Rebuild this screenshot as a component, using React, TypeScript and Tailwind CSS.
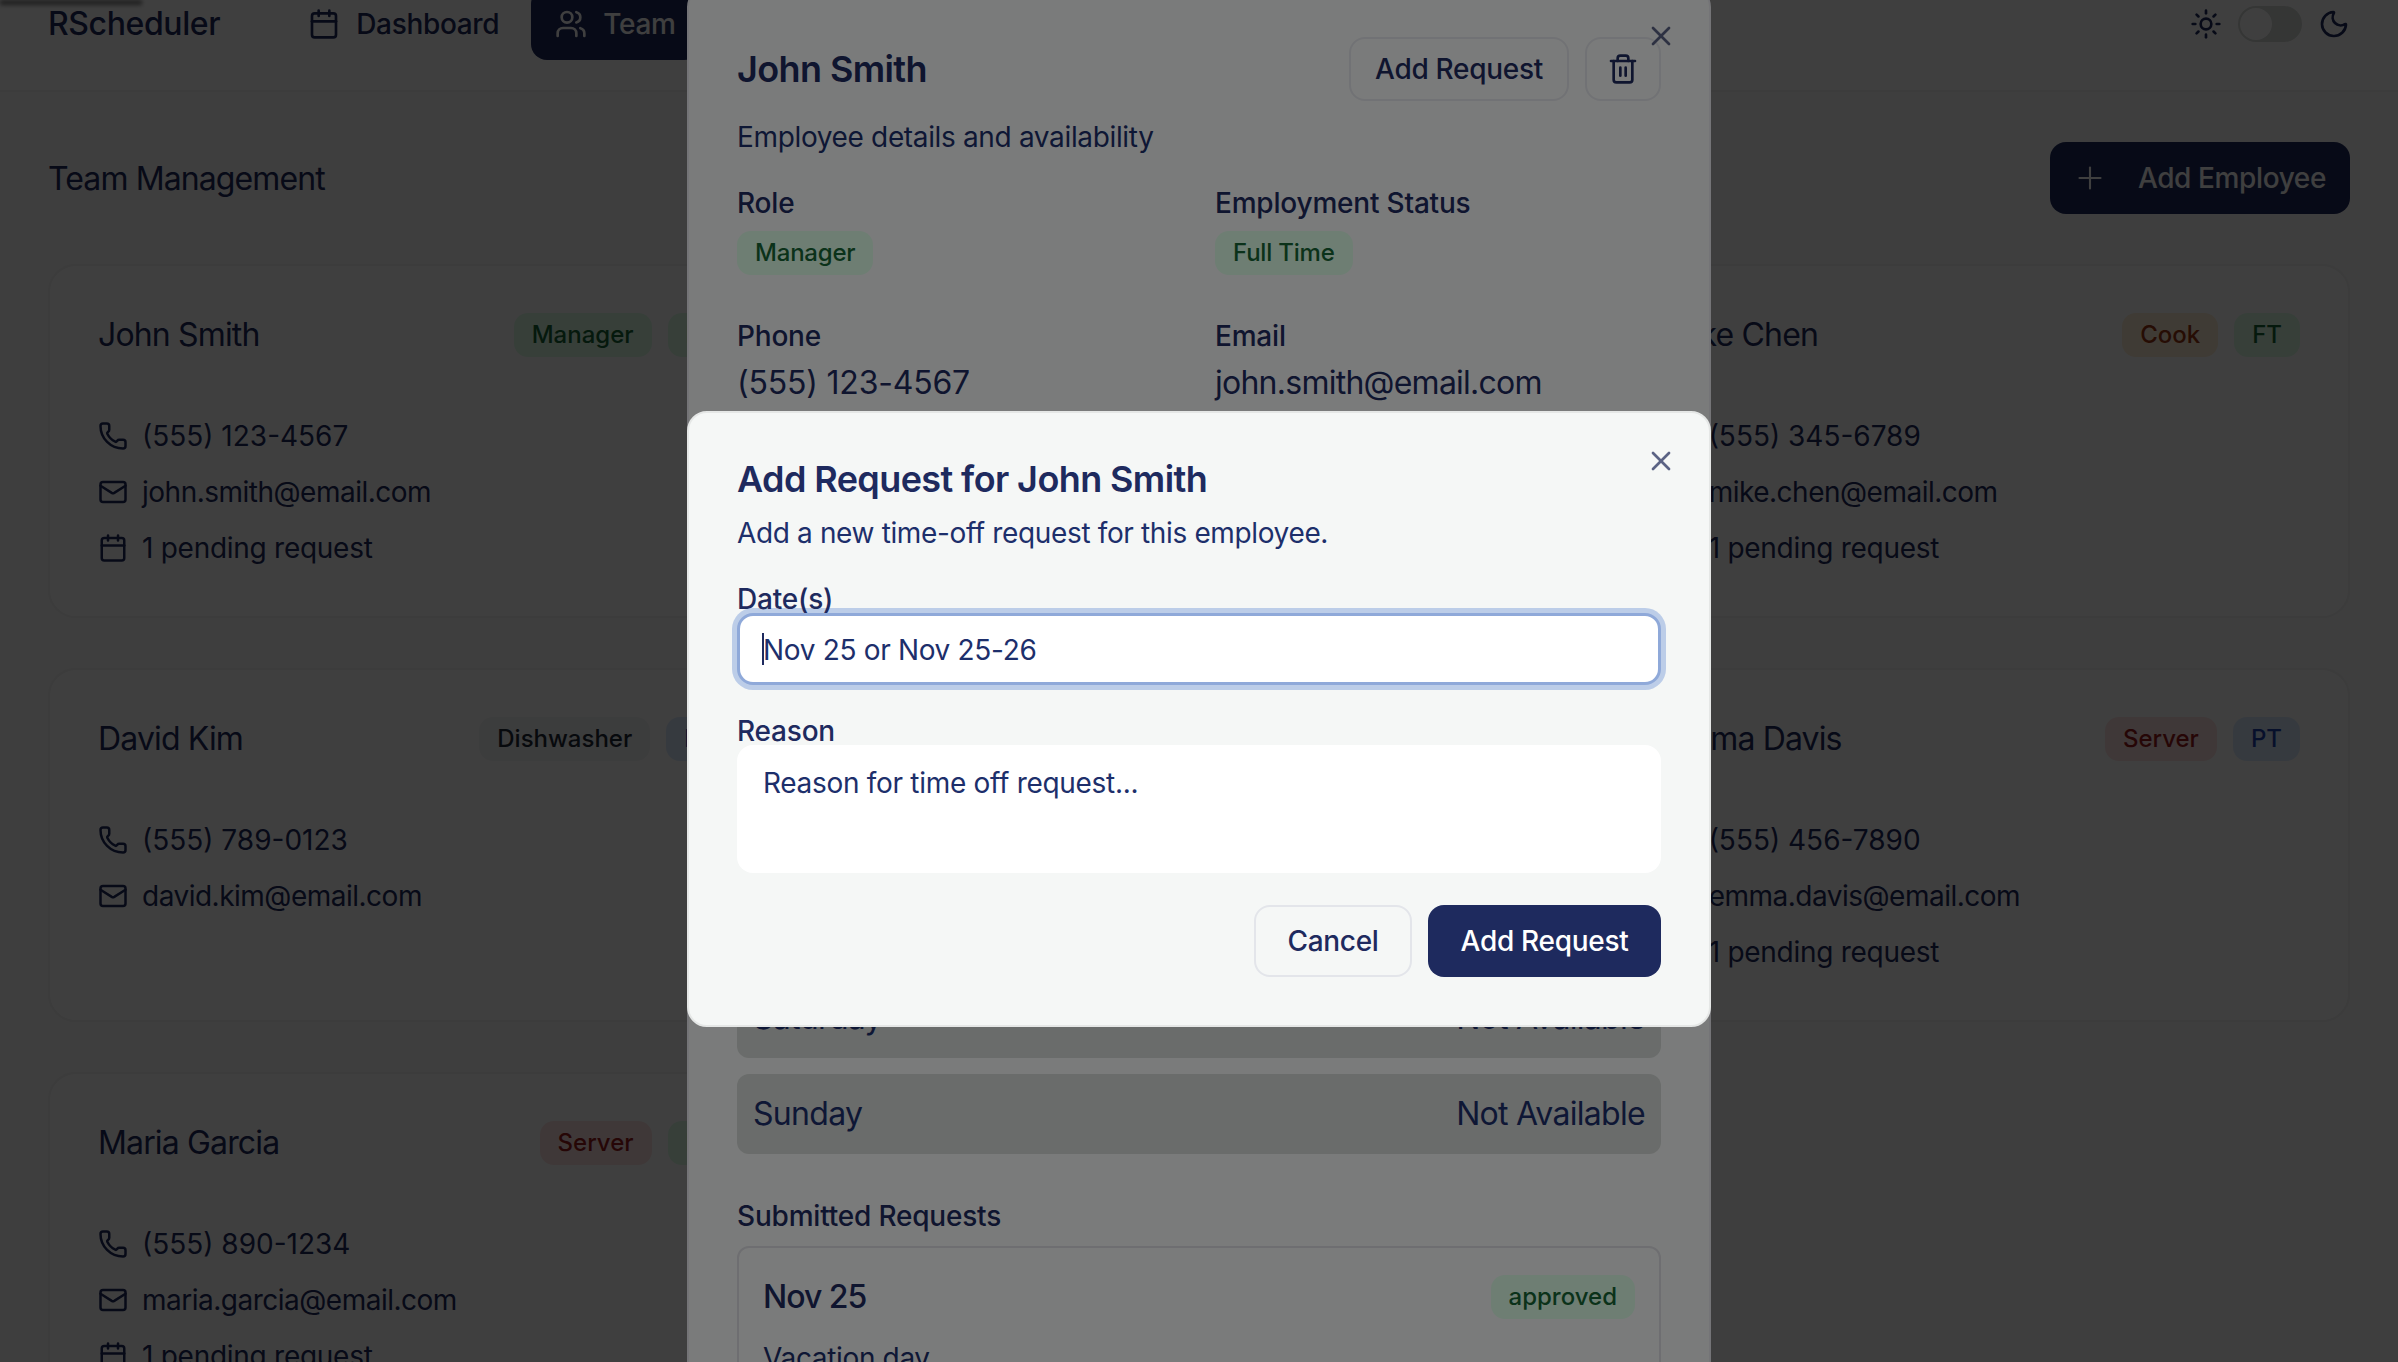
import { Calendar, Mail, Moon, Phone, Plus, Sun, Trash2, Users, X } from 'lucide-react';

type Employee = {
  name: string;
  role: string;
  roleClass: string;
  status: string;
  statusClass: string;
  phone: string;
  email: string;
  pending: boolean;
};

const green = 'bg-[#dcfce7] text-[#166534]';
const blue = 'bg-[#dbeafe] text-[#1e40af]';

const columns: Employee[][] = [
  [
    { name: 'John Smith', role: 'Manager', roleClass: green, status: 'FT', statusClass: green, phone: '(555) 123-4567', email: 'john.smith@email.com', pending: true },
    { name: 'David Kim', role: 'Dishwasher', roleClass: 'bg-[#f3f4f6] text-[#1f2937]', status: 'PT', statusClass: blue, phone: '(555) 789-0123', email: 'david.kim@email.com', pending: false },
    { name: 'Maria Garcia', role: 'Server', roleClass: 'bg-[#fee2e2] text-[#991b1b]', status: 'FT', statusClass: green, phone: '(555) 890-1234', email: 'maria.garcia@email.com', pending: true },
  ],
  [],
  [
    { name: 'Mike Chen', role: 'Cook', roleClass: 'bg-[#ffedd5] text-[#9a3412]', status: 'FT', statusClass: green, phone: '(555) 345-6789', email: 'mike.chen@email.com', pending: true },
    { name: 'Emma Davis', role: 'Server', roleClass: 'bg-[#fee2e2] text-[#991b1b]', status: 'PT', statusClass: blue, phone: '(555) 456-7890', email: 'emma.davis@email.com', pending: true },
  ],
];

const days = ['Monday', 'Tuesday', 'Wednesday', 'Thursday', 'Friday', 'Saturday', 'Sunday'];

function Badge({ className, children }: { className: string; children: React.ReactNode }) {
  return (
    <span className={`inline-flex h-[44px] items-center rounded-[14px] px-[18px] text-[24px] font-medium ${className}`}>
      {children}
    </span>
  );
}

function EmployeeCard({ employee }: { employee: Employee }) {
  return (
    <div className="h-[354px] rounded-[28px] border-2 border-[#f0f0f0] bg-white px-[48px] pt-[47px]">
      <div className="flex h-[44px] items-center justify-between">
        <span className="text-[32px] tracking-[-0.85px]">{employee.name}</span>
        <div className="flex gap-4">
          <Badge className={employee.roleClass}>{employee.role}</Badge>
          <Badge className={employee.statusClass}>{employee.status}</Badge>
        </div>
      </div>
      <div className="mt-[59px] flex flex-col gap-4 text-[28px] leading-[40px]">
        <div className="flex items-center gap-[14px]">
          <Phone size={30} strokeWidth={2} />
          {employee.phone}
        </div>
        <div className="flex items-center gap-[14px] tracking-[-0.5px]">
          <Mail size={30} strokeWidth={2} />
          {employee.email}
        </div>
        {employee.pending && (
          <div className="flex items-center gap-[14px] tracking-[-0.27px]">
            <Calendar size={30} strokeWidth={2} />
            1 pending request
          </div>
        )}
      </div>
    </div>
  );
}

export default function App() {
  return (
    <div className="relative h-[1362px] w-[2398px] overflow-hidden bg-[#f8f8f8] font-['Inter',sans-serif] text-[#1e2a5e]">
      {/* page is scrolled a little, so the header starts above the fold */}
      <div className="-mt-[43px]">
        <header className="flex h-[135px] items-center justify-between border-b-2 border-[#f0f0f0] bg-white px-12">
          <div className="flex items-center gap-16">
            <span className="text-[32px] font-medium tracking-[-0.4px]">RScheduler</span>
            <nav className="flex gap-2 text-[28px] font-medium tracking-[-0.33px]">
              <span className="flex h-[72px] items-center gap-4 rounded-2xl px-6">
                <Calendar size={32} />
                Dashboard
              </span>
              <span className="flex h-[72px] items-center gap-4 rounded-2xl bg-[#1e2a5e] px-6 text-white">
                <Users size={32} />
                Team
              </span>
            </nav>
          </div>
          <div className="flex items-center gap-4">
            <Sun size={32} />
            <span className="flex h-[36px] w-[64px] items-center rounded-full bg-[#d4d8d6] pl-[2px]">
              <span className="h-[32px] w-[32px] rounded-full bg-white" />
            </span>
            <Moon size={32} />
          </div>
        </header>

        <main className="px-12 pt-[50px]">
          <div className="flex h-[72px] items-center justify-between">
            <h2 className="pt-[2px] text-[32px] tracking-[-0.9px]">Team Management</h2>
            <button className="flex h-[72px] items-center gap-[32px] rounded-2xl bg-[#1e2a5e] px-6 text-[28px] font-medium tracking-[-0.38px] text-white">
              <Plus size={36} strokeWidth={1.4} className="-mx-[2px]" />
              Add Employee
            </button>
          </div>
          <div className="mt-[50px] grid grid-cols-3 gap-x-12">
            {columns.map((col, i) => (
              <div key={i} className="flex flex-col gap-[50px]">
                {col.map((employee) => (
                  <EmployeeCard key={employee.name} employee={employee} />
                ))}
              </div>
            ))}
          </div>
        </main>
      </div>

      <div className="absolute left-0 top-0 h-[5px] w-[142px] bg-black/50 blur-[2px]" />

      {/* first dialog: employee details */}
      <div className="absolute inset-0 bg-black/50" />
      <div className="absolute left-[687px] top-[-13px] h-[1500px] w-[1024px] rounded-[20px] border-2 border-[#e8e9ee] bg-[#f5f7f6] p-[48px]">
        <X size={32} strokeWidth={2} className="absolute right-[32px] top-[31px] text-[#5b6384]" />
        <div className="flex items-center justify-between">
          <h2 className="text-[36px] font-semibold tracking-[-0.6px]">John Smith</h2>
          <div className="flex gap-4">
            <button className="flex h-[64px] w-[220px] items-center justify-center rounded-2xl border-2 border-[#e3e5ea] text-[28px] font-medium tracking-[-0.3px]">
              Add Request
            </button>
            <button className="flex h-[64px] w-[76px] items-center justify-center rounded-2xl border-2 border-[#e3e5ea]">
              <Trash2 size={32} />
            </button>
          </div>
        </div>
        <p className="mt-[16px] text-[28px] leading-[40px] tracking-[-0.35px] text-[#1d2f6b]">Employee details and availability</p>
        <div className="mt-[26px] grid grid-cols-2 gap-x-8 text-[28px] font-medium leading-[40px] tracking-[-0.2px]">
          <div>
            <div>Role</div>
            <div className="mt-[8px] flex"><Badge className={green}>Manager</Badge></div>
          </div>
          <div>
            <div>Employment Status</div>
            <div className="mt-[8px] flex"><Badge className={green}>Full Time</Badge></div>
          </div>
          <div className="mt-[41px]">
            <div>Phone</div>
            <div className="mt-[7px] text-[32px] font-normal">(555) 123-4567</div>
          </div>
          <div className="mt-[41px]">
            <div>Email</div>
            <div className="mt-[7px] text-[32px] font-normal tracking-[-0.75px]">john.smith@email.com</div>
          </div>
        </div>
        <div className="mt-[95px] flex flex-col gap-4">
          {days.map((day) => (
            <div key={day} className="flex h-[80px] items-center justify-between rounded-xl bg-[#d4d8d6] px-4 text-[32px] tracking-[-0.7px] text-[#1d2f6b]">
              <span>{day}</span>
              <span>Not Available</span>
            </div>
          ))}
        </div>
        <h3 className="mt-[42px] text-[28px] font-medium leading-[40px] tracking-[-0.2px]">Submitted Requests</h3>
        <div className="mt-[10px] rounded-xl border-2 border-[#dcdde2] px-[24px] pt-[25px]">
          <div className="flex items-center justify-between">
            <span className="text-[32px] font-medium tracking-[-1px]">Nov 25</span>
            <Badge className={green}>approved</Badge>
          </div>
          <p className="mt-4 text-[28px] tracking-[-0.35px] text-[#1d2f6b]">Vacation day</p>
        </div>
      </div>

      {/* second dialog: add request */}
      <div className="absolute inset-0 bg-black/50" />
      <div className="absolute left-[687px] top-[411px] h-[616px] w-[1024px] rounded-[20px] border-2 border-[#e5e7e6] bg-[#f5f7f6] px-[48px] pt-[46px]">
        <X size={32} strokeWidth={2} className="absolute right-[32px] top-[32px] text-[#5b6384]" />
        <h2 className="text-[36px] font-semibold leading-[40px] tracking-[-0.6px]">Add Request for John Smith</h2>
        <p className="mt-[14px] text-[28px] leading-[40px] tracking-[-0.36px] text-[#1d2f6b]">Add a new time-off request for this employee.</p>
        <div className="mt-[26px] text-[28px] font-medium leading-[40px] tracking-[-0.2px]">Date(s)</div>
        <div className="-mt-[6px] flex h-[72px] items-center rounded-2xl border-[3px] border-[#8fa9d9] bg-white px-[22px] text-[28px] tracking-[-0.32px] text-[#1d2f6b] shadow-[0_0_0_5px_#bccde8]">
          <span className="h-[32px] w-[2px] bg-[#1e2a5e]" />
          <span className="-ml-[1px] pt-[2px]">Nov 25 or Nov 25-26</span>
        </div>
        <div className="mt-[26px] text-[28px] font-medium leading-[40px] tracking-[-0.2px]">Reason</div>
        <div className="-mt-[6px] h-[128px] rounded-2xl bg-white px-[26px] py-[18px] text-[28px] leading-[40px] tracking-[-0.3px] text-[#1d2f6b]">
          Reason for time off request...
        </div>
        <div className="mt-[32px] flex justify-end gap-4">
          <button className="h-[72px] w-[158px] rounded-2xl border-2 border-[#e3e5ea] text-[28px] font-medium tracking-[-0.3px]">Cancel</button>
          <button className="h-[72px] w-[233px] rounded-2xl bg-[#1e2a5e] text-[28px] font-medium tracking-[-0.3px] text-white">Add Request</button>
        </div>
      </div>
    </div>
  );
}
